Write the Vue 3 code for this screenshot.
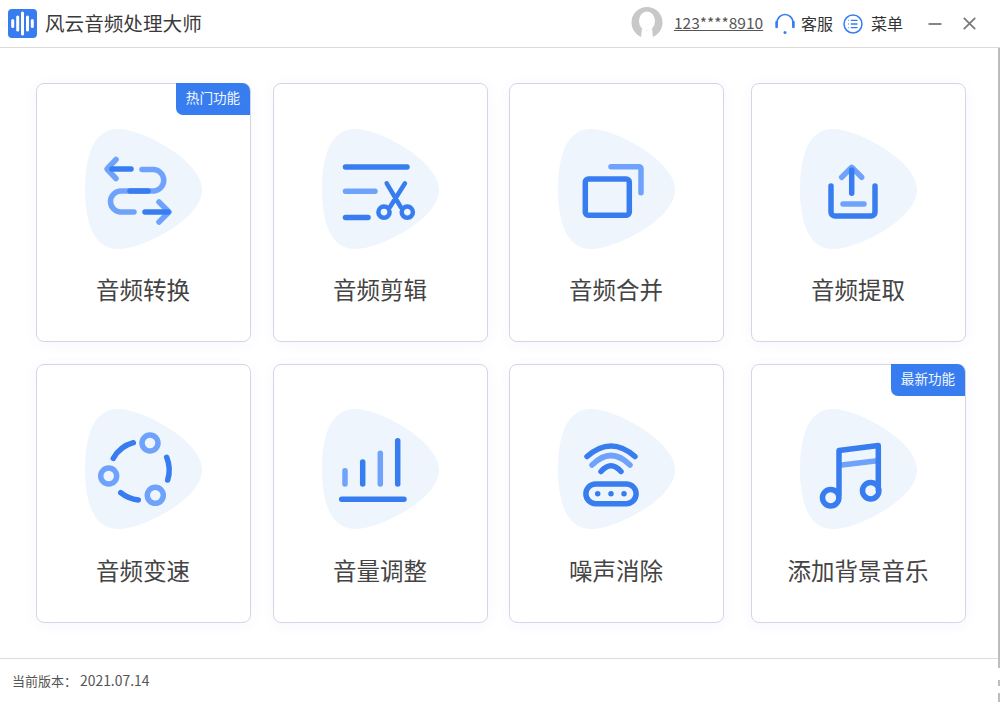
<script setup>
const arc = (x, y, r) => `M${x - r} ${y}a${r} ${r} 0 1 0 ${2 * r} 0a${r} ${r} 0 1 0 ${-2 * r} 0`

const tools = [
  {
    label: '音频转换',
    badge: '热门功能',
    light: 'M31 30.5L22 40L31 49.5M57 40.5H69A10.8 10.8 0 0 1 69 62H36A10.5 10.5 0 0 0 36 83H49M74 73L84 83L74 93',
    dark: 'M27 40H46M45 62H63M60 83H83'
  },
  {
    label: '音频剪辑',
    light: 'M23.5 62.3H53',
    dark: 'M23.5 38H85M23.5 88.5H46',
    thin: `M64.7 54.3L78.7 78M83 54.3L68 78${arc(62, 83.2, 5.6)}${arc(85.3, 83.2, 5.6)}`
  },
  {
    label: '音频合并',
    light: 'M53 37.7H81A2 2 0 0 1 83 39.7V63.7',
    dark: 'M30.3 50H68.3A3 3 0 0 1 71.3 53V83.3A3 3 0 0 1 68.3 86.3H30.3A3 3 0 0 1 27.3 83.3V53A3 3 0 0 1 30.3 50Z'
  },
  {
    label: '音频提取',
    light: 'M41.7 48.3L51.7 38.3L61.7 48.3M43 75H64',
    dark: 'M51.7 41V64.3M31 57V83A4 4 0 0 0 35 87H71A4 4 0 0 0 75 83V57'
  },
  {
    label: '音频变速',
    light: `${arc(65, 34, 8)}${arc(23.7, 67, 8)}${arc(70.3, 86.3, 8)}`,
    dark: 'M28.3 49.3A33 33 0 0 1 48.3 33.7M81.7 48.3A34 34 0 0 1 82.7 71M35.7 83.7A33 33 0 0 0 53.3 91'
  },
  {
    label: '音量调整',
    light: 'M23 61.7V75M58.3 44.3V75',
    dark: 'M40.7 53V75M75.7 31.7V75M19.7 90.3H82'
  },
  {
    label: '噪声消除',
    light: 'M34 56Q53 37 72 56',
    dark: 'M29 47.5Q53 26.5 77 47.5M43 62.5Q53 51 63 62.5M37.7 75H68.3A9.8 9.8 0 0 1 68.3 94.7H37.7A9.8 9.8 0 0 1 37.7 75ZM39.7 84.7h0M53 84.7h0M66 84.7h0'
  },
  {
    label: '添加背景音乐',
    badge: '最新功能',
    light: 'M41.7 56L77.3 51.7',
    dark: `M39 86V41.5L78.3 36.5V81${arc(30.7, 88.7, 8.2)}${arc(70.7, 81.7, 8.2)}`
  }
]
</script>

<template>
  <div class="app">
    <header class="titlebar">
      <svg class="logo" viewBox="0 0 29 29" aria-hidden="true">
        <rect width="29" height="29" rx="4" fill="#387df0" />
        <path d="M4.7 11.5v6M9.7 8v13M14.5 4v21M19.5 8v13M24.3 11.5v6" stroke="#fff" stroke-width="3" stroke-linecap="round" fill="none" />
      </svg>
      <h1 class="app-name">风云音频处理大师</h1>

      <svg class="avatar" viewBox="0 0 32 32" aria-hidden="true">
        <circle cx="16" cy="15.5" r="15.5" fill="#c8c8c8" />
        <ellipse cx="16" cy="14" rx="8" ry="9.5" fill="#fff" />
        <path d="M11 21Q16 26 21 21L22 31H10Z" fill="#fff" />
      </svg>
      <a class="phone">123****8910</a>

      <svg class="headset" viewBox="0 0 20 22" aria-hidden="true">
        <path d="M2 12V9.5a8 8 0 0 1 16 0V12" fill="none" stroke="#387df0" stroke-width="1.7" stroke-linecap="round" />
        <path d="M1.6 9v5M18.4 9v5" stroke="#387df0" stroke-width="2.6" stroke-linecap="round" />
        <circle cx="10" cy="19.6" r="1.5" fill="#387df0" />
      </svg>
      <span class="action service">客服</span>

      <svg class="menu-icon" viewBox="0 0 20 20" aria-hidden="true">
        <circle cx="10" cy="10" r="9" fill="none" stroke="#387df0" stroke-width="1.5" />
        <path d="M7.8 6.4H14.5M7.8 10H14.5M7.8 13.6H14.5M5.4 6.4h.6M5.4 10h.6M5.4 13.6h.6" stroke="#387df0" stroke-width="1.4" fill="none" />
      </svg>
      <span class="action menu-label">菜单</span>

      <svg class="win-min" viewBox="0 0 13 2" aria-hidden="true">
        <path d="M0 1H13" stroke="#666" stroke-width="1.6" />
      </svg>
      <svg class="win-close" viewBox="0 0 13 13" aria-hidden="true">
        <path d="M.8.8L12.2 12.2M12.2.8L.8 12.2" stroke="#777" stroke-width="1.7" />
      </svg>
    </header>

    <main class="grid">
      <button v-for="tool in tools" :key="tool.label" class="card" type="button">
        <span v-if="tool.badge" class="badge">{{ tool.badge }}</span>
        <svg class="glyph" viewBox="0 0 118 120" aria-hidden="true">
          <path class="blob" d="M33 0C58 0 117 32 117 61C117 90 58 120 33 120C8 120 0 92 0 60C0 28 8 0 33 0Z" />
          <path class="light" :d="tool.light" />
          <path class="dark" :d="tool.dark" />
          <path v-if="tool.thin" class="dark thin" :d="tool.thin" />
        </svg>
        <span class="label">{{ tool.label }}</span>
      </button>
    </main>

    <footer class="statusbar">当前版本：<span class="version">2021.07.14</span></footer>
    <i class="edge" aria-hidden="true"></i>
  </div>
</template>

<style scoped>
.app {
  position: relative;
  width: 1000px;
  height: 702px;
  display: flex;
  flex-direction: column;
  overflow: hidden;
  background: #fff;
  font-family: "Noto Sans CJK SC", "Noto Sans", sans-serif;
  color: #444;
}
.titlebar {
  height: 47px;
  flex: none;
  display: flex;
  align-items: center;
  padding-left: 8px;
  border-bottom: 1px solid #dcdcdc;
}
.logo { width: 29px; height: 29px; margin-right: 8px; flex: none; }
.app-name {
  margin: -2px 0 0;
  font-size: 19.6px;
  font-weight: 400;
  line-height: 28px;
  color: #3a3a3a;
  flex: 1;
}
.avatar { width: 32px; height: 32px; flex: none; margin-right: 11px; margin-top: -2px; }
.phone {
  font-size: 15.5px;
  line-height: 20px;
  color: #555;
  text-decoration: underline;
  text-underline-offset: 1px;
  margin-top: -3px;
  margin-right: 12px;
  width: 89px;
  white-space: nowrap;
}
.headset { width: 20px; height: 22px; flex: none; margin-right: 6px; }
.action { font-size: 16px; line-height: 22px; color: #333; margin-top: -2px; }
.service { margin-right: 10px; }
.menu-icon { width: 20px; height: 20px; flex: none; margin-right: 8px; }
.menu-label { margin-right: 25px; }
.win-min { width: 14px; height: 2px; flex: none; margin-right: 21px; }
.win-close { width: 13px; height: 13px; flex: none; margin-right: 24px; margin-top: -1px; }

.grid {
  flex: 1;
  display: grid;
  grid-template-columns: 237px 236px 242px 215px;
  grid-template-rows: 259px 259px;
  row-gap: 22px;
  padding: 35px 0 0 36px;
  align-content: start;
}
.card {
  position: relative;
  width: 215px;
  height: 259px;
  box-sizing: border-box;
  padding: 45px 0 0;
  display: flex;
  flex-direction: column;
  align-items: center;
  border: 1px solid #d4d7e3;
  border-radius: 8px;
  background: #fff;
  box-shadow: 0 2px 14px rgba(70, 90, 240, 0.05);
  font: inherit;
  color: inherit;
}
.card:nth-child(n + 5) { padding-top: 44px; }
.card:nth-child(n + 5) .label { margin-top: 24px; }
.badge {
  position: absolute;
  top: -1px;
  right: 0;
  width: 74px;
  height: 32px;
  display: flex;
  align-items: center;
  justify-content: center;
  padding-bottom: 4px;
  box-sizing: border-box;
  background: #387df0;
  color: #f4f8ff;
  font-size: 13.6px;
  border-radius: 0 8px 0 7px;
}
.glyph { width: 118px; height: 120px; flex: none; }
.blob { fill: #eef5fd; }
.light, .dark {
  fill: none;
  stroke-width: 5.5;
  stroke-linecap: round;
  stroke-linejoin: round;
}
.light { stroke: #6fa3fb; }
.dark { stroke: #387df0; }
.thin { stroke-width: 4.5; }
.label {
  margin-top: 23px;
  margin-right: 1px;
  font-size: 23.5px;
  line-height: 34px;
  color: #444;
}
.statusbar {
  height: 43px;
  flex: none;
  border-top: 1px solid #dcdcdc;
  padding-left: 12px;
  font-size: 13px;
  line-height: 42px;
  color: #555;
}
.version { font-size: 13.9px; margin-left: 3px; }
.edge {
  position: absolute;
  top: 48px;
  right: 0;
  width: 2px;
  height: 654px;
  background: linear-gradient(#bdbdbd 620px, transparent 620px, transparent 632px, #bdbdbd 632px, #bdbdbd 638px, transparent 638px, transparent 645px, #bdbdbd 645px);
}
</style>
